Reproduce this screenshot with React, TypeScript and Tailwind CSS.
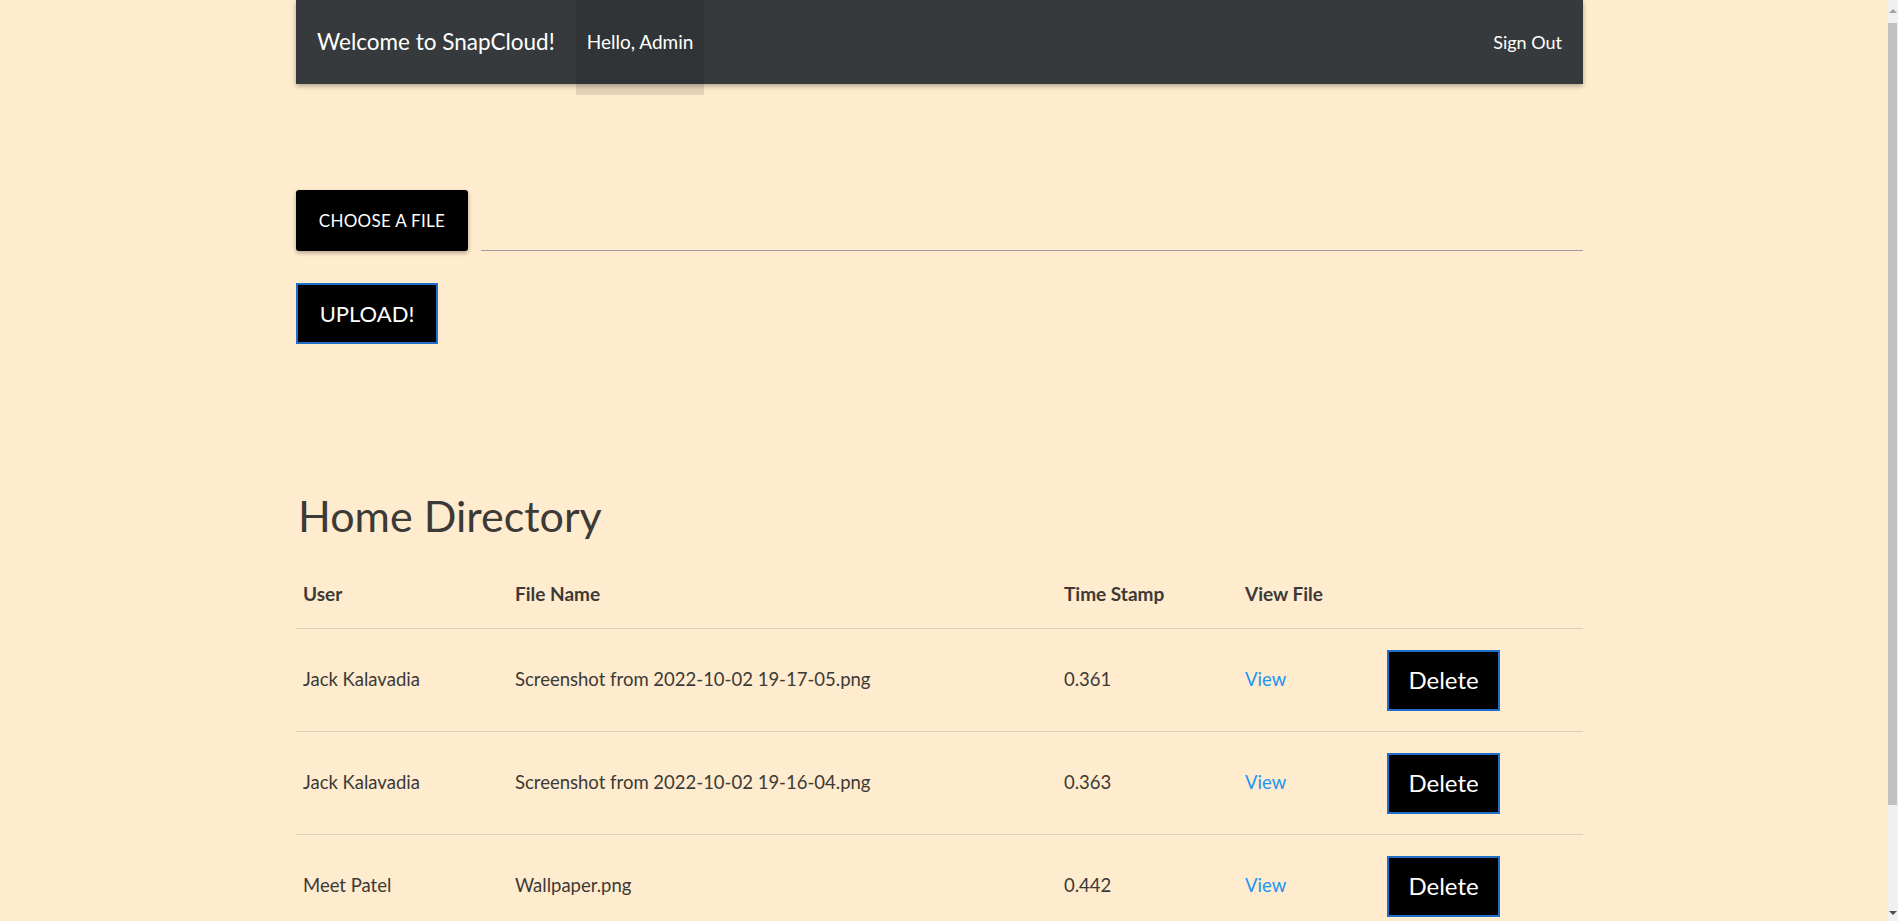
import React from "react";

const rows = [
  { user: "Jack Kalavadia", file: "Screenshot from 2022-10-02 19-17-05.png", ts: "0.361" },
  { user: "Jack Kalavadia", file: "Screenshot from 2022-10-02 19-16-04.png", ts: "0.363" },
  { user: "Meet Patel", file: "Wallpaper.png", ts: "0.442" },
];

export default function App() {
  return (
    <div className="min-h-screen bg-[#ffebcd] font-['Lato','Noto_Sans',sans-serif] text-[#3b3a37]">
      <div className="ml-[296px] w-[1287px] pb-[40px]">
        <nav className="relative h-[84px] bg-[#373a3d] shadow-[0_2px_5px_rgba(0,0,0,0.3)] flex items-start text-white">
          <div className="pl-[21px] text-[22.5px] leading-[84px]">Welcome to SnapCloud!</div>
          <div className="ml-[21px] h-[95px] bg-black/10 px-[11px] text-[19px] leading-[84px]">Hello, Admin</div>
          <div className="ml-auto pr-[21px] text-[18px] leading-[84px]">Sign Out</div>
        </nav>

        <div className="mt-[106px] flex items-end">
          <button className="h-[61px] w-[172px] shrink-0 rounded-[3px] bg-black text-white text-[17px] uppercase tracking-[0.3px] shadow-[0_2px_4px_rgba(0,0,0,0.3)]">
            Choose a file
          </button>
          <div className="ml-[13px] flex-1 border-b border-[#9e9e9e]" />
        </div>

        <button className="mt-[32px] h-[61px] w-[142px] border-2 border-[#1f6fc9] bg-black text-white text-[22px]">
          UPLOAD!
        </button>

        <h4 className="mt-[144px] pl-[2px] text-[43px] leading-[56px] font-normal">Home Directory</h4>

        <div className="mt-[24px]">
          <div className="grid h-[61px] grid-cols-[212px_549px_181px_142px_1fr] items-center border-b border-black/[0.12] pb-[7px] text-[19px] font-bold">
            <div className="px-[7px]">User</div>
            <div className="px-[7px]">File Name</div>
            <div className="px-[7px]">Time Stamp</div>
            <div className="px-[7px]">View File</div>
            <div />
          </div>
          {rows.map((r, i) => (
            <div
              key={i}
              className="grid h-[103px] grid-cols-[212px_549px_181px_142px_1fr] items-center border-b border-black/[0.12] text-[18.5px]"
            >
              <div className="px-[7px]">{r.user}</div>
              <div className="px-[7px]">{r.file}</div>
              <div className="px-[7px]">{r.ts}</div>
              <div className="px-[7px]">
                <a className="text-[#2196f3]" href="#">View</a>
              </div>
              <div className="px-[7px]">
                <button className="h-[61px] w-[113px] border-2 border-[#1f6fc9] bg-black text-white text-[24px]">
                  Delete
                </button>
              </div>
            </div>
          ))}
        </div>
      </div>

      <div className="fixed right-0 top-0 flex h-screen w-[11px] flex-col items-center bg-[#f0f0f0]">
        <div className="mt-[9px] h-0 w-0 border-x-[4px] border-b-[4px] border-x-transparent border-b-[#a3a3a3]" />
        <div className="mt-[10px] h-[782px] w-[9px] bg-[#c1c1c1]" />
        <div className="mt-auto mb-[6px] h-0 w-0 border-x-[4px] border-t-[4px] border-x-transparent border-t-[#505050]" />
      </div>
    </div>
  );
}
